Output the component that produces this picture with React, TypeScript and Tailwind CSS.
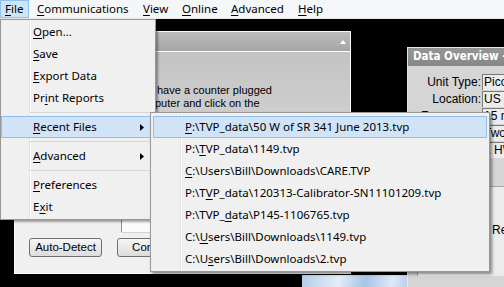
import React from 'react'

// label with a Windows-style mnemonic: '&' marks the underlined letter
const Mn = ({ label }: { label: string }) => {
  const i = label.indexOf('&')
  if (i < 0) return <>{label}</>
  return (
    <>
      {label.slice(0, i)}
      <span className="underline decoration-1 underline-offset-[2px]">{label[i + 1]}</span>
      {label.slice(i + 2)}
    </>
  )
}

const topMenu = [
  { label: '&File', w: 'w-[29px] pl-[4px]', open: true },
  { label: '&Communications', w: 'w-[107px] pl-[8px]' },
  { label: '&View', w: 'w-[39px] pl-[7px]' },
  { label: '&Online', w: 'w-[49px] pl-[7px]' },
  { label: '&Advanced', w: 'w-[67px] pl-[7px]' },
  { label: '&Help', w: 'w-[40px] pl-[7px]' }
]

const recentFiles = [
  '&P:\\TVP_data\\50 W of SR 341 June 2013.tvp',
  'P:\\&TVP_data\\1149.tvp',
  '&C:\\Users\\Bill\\Downloads\\CARE.TVP',
  'P:\\T&VP_data\\120313-Calibrator-SN11101209.tvp',
  'P:\\TVP_&data\\P145-1106765.tvp',
  'C:\\&Users\\Bill\\Downloads\\1149.tvp',
  'C:\\U&sers\\Bill\\Downloads\\2.tvp'
]

const Arrow = () => (
  <svg width="4" height="7" viewBox="0 0 4 7" className="shrink-0">
    <polygon points="0,0 4,3.5 0,7" fill="#000" />
  </svg>
)

const Separator = () => (
  <div className="flex h-[7px] items-center pl-[28px]">
    <div className="h-px flex-1 bg-[#d7d7d7]" />
  </div>
)

const FileMenu = () => (
  <div className="absolute left-0 top-[19px] w-[156px] border border-[#979797] bg-[#f0f0f0] bg-[linear-gradient(to_right,transparent_28px,#e2e3e3_28px,#e2e3e3_29px,#ffffff_29px,#ffffff_30px,transparent_30px)] py-px shadow-[2px_2px_2px_rgba(0,0,0,0.35)]">
    {['&Open...', '&Save', '&Export Data', 'Pr&int Reports'].map(t => (
      <div key={t} className="flex h-[22px] items-center pl-[32px]">
        <Mn label={t} />
      </div>
    ))}
    <Separator />
    <div className="flex h-[22px] items-center justify-between border border-[#90bde9] bg-[#d1e4f7] pl-[31px] pr-[10px]">
      <span>
        <Mn label="&Recent Files" />
      </span>
      <Arrow />
    </div>
    <Separator />
    <div className="flex h-[22px] items-center justify-between pl-[32px] pr-[11px]">
      <span>
        <Mn label="&Advanced" />
      </span>
      <Arrow />
    </div>
    <Separator />
    <div className="flex h-[22px] items-center pl-[32px]">
      <Mn label="&Preferences" />
    </div>
    <div className="flex h-[22px] items-center pl-[32px]">
      <Mn label="E&xit" />
    </div>
  </div>
)

const RecentMenu = () => (
  <div className="absolute left-[150px] top-[112px] w-[340px] border border-[#979797] bg-[#f0f0f0] bg-[linear-gradient(to_right,transparent_29px,#e2e3e3_29px,#e2e3e3_30px,#ffffff_30px,#ffffff_31px,transparent_31px)] pb-px pt-[3px] shadow-[2px_2px_3px_rgba(0,0,0,0.45)]">
    {recentFiles.map((f, i) => (
      <div
        key={f}
        className={
          i === 0
            ? 'mx-[2px] flex h-[22px] items-center border border-[#90bde9] bg-[#d1e4f7] pl-[31px]'
            : 'mx-[2px] flex h-[22px] items-center pl-[32px]'
        }
      >
        <Mn label={f} />
      </div>
    ))}
  </div>
)

const ConnectDialog = () => (
  <div className="absolute left-[14px] top-[31px] flex h-[243px] w-[337px] flex-col border border-[#fafafa] font-['Liberation_Sans',sans-serif] text-[11px]">
    <div className="flex h-[20px] shrink-0 items-center justify-end border-b border-white bg-gradient-to-b from-[#bcbcbc] to-[#a5a5a5] pr-[4px]">
      <svg width="6" height="4" viewBox="0 0 6 4">
        <polygon points="0,4 3,0 6,4" fill="#fff" />
      </svg>
    </div>
    <div className="flex flex-1 flex-col bg-[linear-gradient(to_bottom,#c3c3c3,#cdcdcd_25%,#f0f0f0_75%,#f0f0f0)] pt-[32px]">
      {/* instructions: the start of each line sits behind the File menu */}
      <div className="ml-[140px] h-[26px] overflow-hidden leading-[13px]">
        <div className="whitespace-nowrap pl-[2px]">have a counter plugged</div>
        <div className="flex whitespace-nowrap">
          <span className="-ml-[40px] w-[40px] shrink-0 text-right">com</span>
          <span>puter and click on the</span>
        </div>
      </div>
      <div className="ml-[106px] mt-[76px] h-[46px] w-[210px] border-l border-t border-[#8a8a8a] bg-[#fbfbfb] shadow-[0_1px_0_#d4d4d4]" />
      <div className="ml-[14px] mt-[6px] flex gap-[15px] text-[11.5px]">
        <button className="flex h-[19px] w-[73px] items-center justify-center rounded-[3px] border border-[#707070] bg-gradient-to-b from-[#f6f6f6] to-[#dcdcdc]">
          Auto-Detect
        </button>
        <button className="flex h-[19px] w-[73px] items-center justify-center rounded-[3px] border border-[#707070] bg-gradient-to-b from-[#f6f6f6] to-[#dcdcdc]">
          Connect
        </button>
      </div>
    </div>
  </div>
)

const overviewRows = [
  ['Unit Type:', 'PicoCount 2500'],
  ['Location:', 'US 50 W of SR 341'],
  ['Frequency:', '15 minutes'],
  ['Direction:', 'Two Way'],
  ['Road:', '1 HWY 341']
]

const DataOverview = () => (
  <div className="absolute left-[407px] top-[47px] h-[250px] w-[120px] border border-[#e6e6e6] bg-[#d5d5d5] font-['Liberation_Sans',sans-serif] text-[12px]">
    <div className="flex h-[18px] items-center whitespace-nowrap bg-gradient-to-b from-[#959595] to-[#888888] pl-[5px] font-['DejaVu_Sans_Condensed','DejaVu_Sans',sans-serif] text-[11.5px] font-bold text-white">
      Data Overview - PicoCount
    </div>
    <div className="pt-[7px]">
      {overviewRows.map(([k, v]) => (
        <div key={k} className="flex h-[17px] items-center">
          <span className="w-[73px] shrink-0 text-right">{k}</span>
          <span className="ml-px flex h-[16px] flex-1 items-center whitespace-nowrap border-l border-t border-[#7a7a7a] bg-[#ececec] pl-px">
            {v}
          </span>
        </div>
      ))}
      <div className="ml-[9px] mt-[28px] h-[90px] border-l border-t border-[#a8a8a8] bg-[#ececec] pl-[74px] pt-[34px]">
        Report
      </div>
    </div>
  </div>
)

export default function App() {
  return (
    <div className="relative h-[287px] w-[504px] overflow-hidden bg-black font-['Noto_Sans','Segoe_UI',sans-serif] text-[11.5px] text-black">
      {/* menu bar */}
      <div className="flex h-[19px] border-b border-[#e8e8e8] bg-[#f5f6f7]">
        {topMenu.map(m => (
          <div
            key={m.label}
            className={
              m.open
                ? `flex h-full items-center border border-[#90c0ec] bg-[#cde5f7] ${m.w}`
                : `flex h-full items-center ${m.w}`
            }
          >
            <Mn label={m.label} />
          </div>
        ))}
      </div>

      {/* windows behind the menu */}
      <ConnectDialog />
      <DataOverview />
      <div className="absolute left-[302px] top-[275px] h-[14px] w-[105px] bg-[linear-gradient(100deg,#b4cce8,#e4edf8_35%,#a7c3e6_60%,#dfe9f6_85%,#b9cfea)]" />

      {/* open menus */}
      <FileMenu />
      <RecentMenu />
    </div>
  )
}
